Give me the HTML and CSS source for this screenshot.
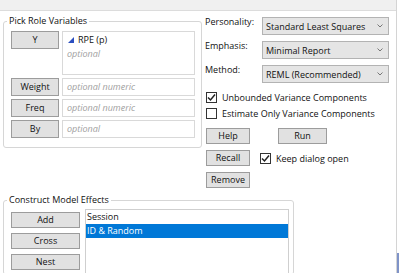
FILE: index.html
```html
<!DOCTYPE html>
<html>
<head>
<title>Fit Model</title>
<link rel="stylesheet" href="styles.css">
</head>
<body>

<div class="window">
<div class="content">
<!-- top strip -->
<div class="topbar"></div>

<div class="main">
<!-- role variables -->
<fieldset class="group roles">
<legend>Pick Role Variables</legend>
<div class="role-grid">
<button class="btn">Y</button>
<div class="field tall">
<div class="var"><svg class="cont-icon" width="6" height="6" viewBox="0 0 6 6"><polygon points="0,6 6,6 6,0" fill="#2b4fc0"/></svg>RPE (p)</div>
<div class="hint">optional</div>
</div>
<button class="btn">Weight</button>
<div class="field"><span class="hint">optional numeric</span></div>
<button class="btn">Freq</button>
<div class="field"><span class="hint">optional numeric</span></div>
<button class="btn">By</button>
<div class="field"><span class="hint">optional</span></div>
</div>
</fieldset>

<!-- options -->
<div class="options">
<div class="select-grid">
<span class="opt-label">Personality:</span>
<div class="select"><span>Standard Least Squares</span><svg width="6" height="4" viewBox="0 0 6 4"><polyline points="0.5,0.5 3,3 5.5,0.5" fill="none" stroke="#777" stroke-width="1"/></svg></div>
<span class="opt-label">Emphasis:</span>
<div class="select"><span>Minimal Report</span><svg width="6" height="4" viewBox="0 0 6 4"><polyline points="0.5,0.5 3,3 5.5,0.5" fill="none" stroke="#777" stroke-width="1"/></svg></div>
<span class="opt-label">Method:</span>
<div class="select"><span>REML (Recommended)</span><svg width="6" height="4" viewBox="0 0 6 4"><polyline points="0.5,0.5 3,3 5.5,0.5" fill="none" stroke="#777" stroke-width="1"/></svg></div>
</div>

<div class="checks">
<label class="check"><span class="box"><svg width="9" height="9" viewBox="0 0 9 9"><polyline points="1,4.5 3.5,7 8,1.5" fill="none" stroke="#222" stroke-width="1.5"/></svg></span>Unbounded Variance Components</label>
<label class="check"><span class="box"></span>Estimate Only Variance Components</label>
</div>

<div class="actions">
<div class="action-row">
<button class="btn small">Help</button>
<button class="btn small run">Run</button>
</div>
<div class="action-row">
<button class="btn small">Recall</button>
<label class="check keep"><span class="box"><svg width="9" height="9" viewBox="0 0 9 9"><polyline points="1,4.5 3.5,7 8,1.5" fill="none" stroke="#222" stroke-width="1.5"/></svg></span>Keep dialog open</label>
</div>
<div class="action-row">
<button class="btn small">Remove</button>
</div>
</div>
</div>
</div>

<!-- model effects -->
<fieldset class="group effects">
<legend>Construct Model Effects</legend>
<div class="effects-body">
<div class="effect-btns">
<button class="btn wide">Add</button>
<button class="btn wide">Cross</button>
<button class="btn wide">Nest</button>
</div>
<div class="list">
<div class="item">Session</div>
<div class="item selected">ID &amp; Random</div>
</div>
</div>
</fieldset>
</div>

<div class="edge"><div class="edge-blue"></div></div>
</div>

</body>
</html>
```

FILE: styles.css
```css
* {
margin: 0;
padding: 0;
box-sizing: border-box;
}

body {
width: 399px;
height: 273px;
overflow: hidden;
background: #fff;
font-family: 'Open Sans', 'Noto Sans', sans-serif;
font-size: 9px;
color: #111;
}

.window {
display: flex;
height: 273px;
}

.content {
flex: 1;
min-width: 0;
overflow: hidden;
}

.topbar {
height: 11px;
background: #f0f0f0;
border-bottom: 1px solid #dcdcdc;
}

.main {
display: flex;
align-items: flex-start;
gap: 3px;
padding-left: 3px;
margin-top: 3px;
}

/* group boxes */
.group {
border: 1px solid #d6d6d6;
border-radius: 3px;
min-width: 0;
}

.group legend {
font-size: 9px;
line-height: 14px;
padding: 0 2px;
margin-left: -4px;
}

.roles {
width: 199px;
padding: 3px 6px 9px 7px;
}

.role-grid {
display: grid;
grid-template-columns: 48px 133px;
grid-template-rows: 44px 18px 18px 18px;
column-gap: 3px;
row-gap: 3px;
}

.btn {
font-family: inherit;
font-size: 9px;
color: #111;
background: #e1e1e1;
border: 1px solid #9c9c9c;
height: 18px;
line-height: 14px;
text-align: center;
}

.role-grid .btn {
align-self: start;
}

.field {
background: #fff;
border: 1px solid #d9d9d9;
padding: 0 4px;
line-height: 16px;
}

.field.tall {
padding-top: 1px;
line-height: 14px;
}

.var {
display: flex;
align-items: center;
gap: 4px;
}

.cont-icon {
margin-left: 1px;
}

.hint {
color: #a0a0a0;
font-style: italic;
}

/* options column */
.options {
width: 186px;
padding-top: 3px;
}

.select-grid {
display: grid;
grid-template-columns: 57px 127px;
grid-auto-rows: 18px;
row-gap: 6px;
}

.opt-label {
line-height: 12px;
margin-top: -1px;
}

.select {
display: flex;
align-items: center;
justify-content: space-between;
background: #e5e5e5;
border: 1px solid #b3b3b3;
padding: 0 5px 0 3px;
}

.checks {
margin-top: 6px;
}

.check {
display: flex;
align-items: center;
gap: 5px;
height: 16px;
padding-left: 1px;
}

.box {
width: 11px;
height: 11px;
border: 1px solid #333;
background: #fff;
display: flex;
align-items: center;
justify-content: center;
}

.actions {
margin-top: 7px;
display: flex;
flex-direction: column;
gap: 6px;
padding-left: 1px;
}

.action-row {
display: flex;
align-items: center;
gap: 10px;
height: 16px;
}

.btn.small {
width: 44px;
height: 16px;
line-height: 12px;
}

.btn.run {
width: 49px;
margin-left: 18px;
}

.keep {
padding-left: 0;
}

/* effects */
.effects {
width: 291px;
margin: 5px 0 0 3px;
padding: 2px 4px 0 7px;
height: 82px;
}

.effects-body {
display: flex;
gap: 5px;
align-items: flex-start;
}

.effect-btns {
display: flex;
flex-direction: column;
gap: 5px;
margin-top: 3px;
}

.btn.wide {
width: 69px;
height: 16px;
line-height: 12px;
}

.list {
width: 204px;
height: 66px;
border: 1px solid #cfcfcf;
background: #fff;
}

.item {
line-height: 14px;
padding-left: 1px;
}

.item.selected {
background: #0078d7;
color: #fff;
}

/* right window edge */
.edge {
width: 3px;
border-left: 1px solid #d4d4d4;
display: flex;
flex-direction: column;
justify-content: flex-end;
}

.edge-blue {
height: 20px;
background: #7f93c8;
}
```
